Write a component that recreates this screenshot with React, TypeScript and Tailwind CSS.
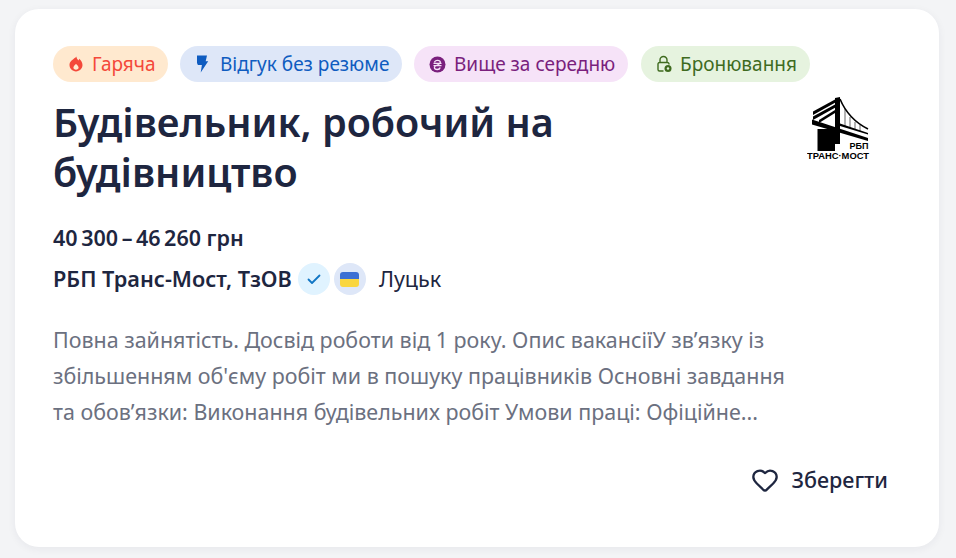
import React from 'react';
import { Heart } from 'lucide-react';

const Flame = () => (
    <svg width="16" height="16" viewBox="0 0 16 16" fill="#f4483a" className="shrink-0">
        <path fillRule="evenodd" d="M8.400.6c.2 2.100 1.300 3.200 2.200 3.900.3-.6.500-1.100.5-1.700 1.900 1.300 3.400 3.700 3.400 6.300 0 3.500-2.900 6.300-6.500 6.300S1.500 12.600 1.500 9.100c0-3.500 2.600-4.900 4-6.100C6.600 2.200 7.800 1.600 8.400.6ZM8 7.900c-1.300 1.200-2.600 2.200-2.600 3.700 0 1.300 1.100 2.200 2.600 2.200s2.600-.9 2.600-2.200c0-1.500-1.300-2.500-2.600-3.700Z" />
    </svg>
);

const Bolt = () => (
    <svg width="16" height="18" viewBox="0 0 16 18" fill="#0f5cc0" className="shrink-0">
        <path d="M3 .5h10l-1.300 5.700h2.500L6.700 17.500l1.200-7.500H3.900L3 8Z" />
    </svg>
);

const Hryvnia = () => (
    <svg width="17" height="17" viewBox="0 0 17 17" className="shrink-0">
        <circle cx="8.500" cy="8.500" r="8" fill="#7a1f7d" />
        <path d="M5.500 6.300c.3-1.300 1.500-2 3-2 1.600 0 2.800.8 2.800 2.100 0 1.500-2 2.100-3 2.600-1 .5-2.900 1.100-2.900 2.500 0 1.200 1.200 2 2.800 2 1.500 0 2.700-.7 3-2M4.500 7.400h8M4.500 9.600h8" fill="none" stroke="#f6e3f8" strokeWidth="1.300" />
    </svg>
);

const LockBadge = () => (
    <svg width="18" height="18" viewBox="0 0 18 18" fill="none" className="shrink-0">
        <path d="M5 7.500V5a3.500 3.500 0 0 1 7 0v2.500M8 16H4.500A1.500 1.500 0 0 1 3 14.500V9a1.500 1.500 0 0 1 1.500-1.500h8A1.500 1.500 0 0 1 14 9" stroke="#3f6b1f" strokeWidth="1.400" strokeLinecap="round" />
        <circle cx="13" cy="13.500" r="3.500" fill="#3f6b1f" />
        <circle cx="13" cy="13.500" r="1.200" fill="#e6f3df" />
    </svg>
);

const Logo = () => (
    <svg width="66" height="66" viewBox="0 0 66 66" className="shrink-0">
        {/* left cables */}
        <path d="M6 15.500 28 3.500v3.200L6 19Z" fill="#000" />
        <path d="M6 20.500 28 8.500v3.200L6 24Z" fill="#000" />
        <path d="M12 24 28 14v3L12 27Z" fill="#000" />
        {/* tower */}
        <path d="M28 2l5-1v47h-5z" fill="#000" />
        {/* deck */}
        <path d="M5 23.500 61 42v3L5 28.500Z" fill="#000" />
        {/* block under the deck */}
        <path d="M10.500 33H28v22H10.500z" fill="#000" />
        <path d="M33 27.500 61 37v1.500L33 30Z" fill="#000" />
        {/* right cable and hangers */}
        <path d="M33 3C38 15 47 26 61 33" stroke="#000" strokeWidth="1.600" fill="none" />
        <path d="M38 13v17M43 21v11M48 26v8M53 29v6" stroke="#000" strokeWidth=".6" />
        <text x="61.500" y="52.500" textAnchor="end" fontFamily="Liberation Sans" fontWeight="700" fontSize="9" fill="#000">РБП</text>
        <text x="0" y="62.500" fontFamily="Liberation Sans" fontWeight="700" fontSize="9" textLength="62" lengthAdjust="spacingAndGlyphs" fill="#000">ТРАНС·МОСТ</text>
    </svg>
);

const tags = [
    { label: 'Гаряча', icon: <Flame />, box: 'bg-[#ffe9cf] text-[#f4483a] w-[115px] pl-[15px] gap-2' },
    { label: 'Відгук без резюме', icon: <Bolt />, box: 'bg-[#dee7f8] text-[#0f5cc0] w-[222px] pl-[14px] gap-[10px]' },
    { label: 'Вище за середню', icon: <Hryvnia />, box: 'bg-[#f6e3f8] text-[#7a1f7d] w-[214px] pl-[15px] gap-[8px]' },
    { label: 'Бронювання', icon: <LockBadge />, box: 'bg-[#e6f3df] text-[#3f6b1f] w-[169px] ml-px pl-[14px] gap-[7px]' },
];

export default function App() {
    return (
        <div className="h-[558px] w-[956px] overflow-hidden bg-[#f3f4f6] pl-[15px] pt-[9px] font-['Noto_Sans',sans-serif] text-[#1e2640]">
            <div className="flex h-[538px] w-[924px] flex-col rounded-[24px] bg-white pl-[38px] pr-[52px] pt-[37px] shadow-[0_2px_8px_rgba(30,38,64,0.06)]">
                <div className="flex gap-3">
                    {tags.map((tag) => (
                        <div key={tag.label} className={`flex h-9 items-center rounded-full text-[19px] leading-none ${tag.box}`}>
                            {tag.icon}
                            <span>{tag.label}</span>
                        </div>
                    ))}
                </div>

                <div className="mt-[15px] flex items-start justify-between">
                    <h1 className="w-[560px] text-[39.6px] font-semibold leading-[50px]">
                        Будівельник, робочий на будівництво
                    </h1>
                    <div className="mr-[14px] -mt-px">
                        <Logo />
                    </div>
                </div>

                <div className="mt-[27px] text-[21.5px] font-semibold leading-7">40&#8201;300&#8201;–&#8201;46&#8201;260 грн</div>

                <div className="mt-[11px] flex h-8 items-center text-[21.5px] leading-7">
                    <span className="font-semibold text-[21.7px]">РБП Транс-Мост, ТзОВ</span>
                    <span className="ml-[6px] flex h-8 w-8 items-center justify-center rounded-full bg-[#e0f3ff]">
                        <svg width="16" height="16" viewBox="0 0 16 16" fill="none">
                            <path d="M2.500 8.500 6 12l7.500-7.500" stroke="#1176c4" strokeWidth="1.800" strokeLinecap="round" strokeLinejoin="round" />
                        </svg>
                    </span>
                    <span className="ml-[4px] flex h-8 w-8 items-center justify-center rounded-full bg-[#dee7f8]">
                        <span className="flex h-[15px] w-[19px] flex-col overflow-hidden rounded-[3px]">
                            <span className="h-1/2 bg-[#3b6fd4]" />
                            <span className="h-1/2 bg-[#f9d63f]" />
                        </span>
                    </span>
                    <span className="ml-[13px]">Луцьк</span>
                </div>

                <p className="mt-[27px] w-[750px] text-[21.45px] leading-[36px] text-[#6b7080]">
                    Повна зайнятість. Досвід роботи від 1 року. Опис вакансіїУ зв’язку із збільшенням об'єму робіт ми в пошуку працівників Основні завдання та обов’язки: Виконання будівельних робіт Умови праці: Офіційне...
                </p>

                <div className="mt-[36px] flex items-center justify-end gap-[13px]">
                    <Heart size={28} strokeWidth={2} />
                    <span className="-mr-px text-[21.5px] font-medium leading-7">Зберегти</span>
                </div>
            </div>
        </div>
    );
}
